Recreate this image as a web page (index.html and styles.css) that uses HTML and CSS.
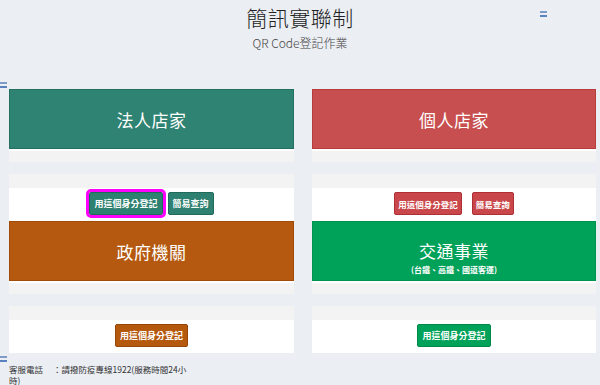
FILE: index.html
```html
<!DOCTYPE html>
<html lang="zh-Hant">
<head>
<meta charset="utf-8">
<title>簡訊實聯制</title>
<link rel="stylesheet" href="styles.css">
</head>
<body>
<header class="head">
  <h1 class="title">簡訊實聯制</h1>
  <p class="subtitle">QR Code登記作業</p>
  <span class="pic pic-top"><svg width="7" height="6" viewBox="0 0 7 6"><rect x="0" y="0" width="7" height="2" fill="#7f9cc9"/><rect x="0" y="4" width="7" height="2" fill="#5b82c0"/></svg></span>
</header>
<div class="picrow"><svg width="7" height="6" viewBox="0 0 7 6"><rect x="0" y="0" width="7" height="2" fill="#7f9cc9"/><rect x="0" y="4" width="7" height="2" fill="#5b82c0"/></svg></div>
<main class="grid">
  <section class="cell">
    <div class="card">
      <div class="hero teal">法人店家</div>
      <div class="foot"></div>
    </div>
    <div class="card card-low">
      <div class="cap"></div>
      <div class="actions">
        <a class="btn btn-teal btn-focus">用這個身分登記</a>
        <a class="btn btn-teal">簡易查詢</a>
      </div>
    </div>
  </section>
  <section class="cell">
    <div class="card">
      <div class="hero red">個人店家</div>
      <div class="foot"></div>
    </div>
    <div class="card card-low">
      <div class="cap"></div>
      <div class="actions actions-wide">
        <a class="btn btn-red btn-slim">用這個身分登記</a>
        <a class="btn btn-red btn-slim">簡易查詢</a>
      </div>
    </div>
  </section>
  <section class="cell">
    <div class="card">
      <div class="hero orange">政府機關</div>
      <div class="foot"></div>
    </div>
    <div class="card card-low">
      <div class="cap"></div>
      <div class="actions">
        <a class="btn btn-orange">用這個身分登記</a>
      </div>
    </div>
  </section>
  <section class="cell">
    <div class="card">
      <div class="hero green hero-stack">
        <span class="hero-main">交通事業</span>
        <span class="hero-sub">(台鐵、高鐵、國道客運)</span>
      </div>
      <div class="foot"></div>
    </div>
    <div class="card card-low">
      <div class="cap"></div>
      <div class="actions">
        <a class="btn btn-green">用這個身分登記</a>
      </div>
    </div>
  </section>
</main>
<div class="picrow picrow-foot"><svg width="7" height="6" viewBox="0 0 7 6"><rect x="0" y="0" width="7" height="2" fill="#7f9cc9"/><rect x="0" y="4" width="7" height="2" fill="#5b82c0"/></svg></div>
<footer class="contact">
  <div class="contact-line"><span class="label">客服電話</span><span>：請撥防疫專線1922(服務時間24小</span></div>
  <div class="contact-line">時)</div>
</footer>
</body>
</html>
```

FILE: styles.css
```css
* { box-sizing: border-box; }
html, body { margin: 0; padding: 0; }
body {
  background: #ebeef3;
  font-family: "Noto Sans CJK TC", "Noto Sans", sans-serif;
  color: #333;
  width: 600px;
  height: 385px;
  overflow: hidden;
}
.head {
  position: relative;
  text-align: center;
  padding-top: 2px;
}
.title {
  margin: 0;
  font-size: 21px;
  line-height: 30px;
  font-weight: 300;
  color: #222;
  letter-spacing: 0.5px;
}
.subtitle {
  margin: 2px 0 0;
  font-size: 12px;
  line-height: 18px;
  font-weight: 300;
  color: #444;
}
.pic { display: block; line-height: 0; }
.pic-top { position: absolute; left: 540px; top: 10px; }
.picrow {
  margin-top: 29px;
  height: 8px;
  line-height: 0;
}
.picrow-foot { margin-top: 2px; height: 9px; }
.grid {
  display: grid;
  grid-template-columns: 285px 284px;
  column-gap: 18px;
  padding-left: 9px;
}
.cell { display: flex; flex-direction: column; }
.card {
  background: #fff;
  display: flex;
  flex-direction: column;
}
.card-low { margin-top: 12px; }
.hero {
  height: 60px;
  display: flex;
  align-items: center;
  justify-content: center;
  color: #fff;
  font-size: 17px;
  letter-spacing: 0.5px;
  border: 1px solid transparent;
}
.teal { background: #2f8373; border-color: #237060; }
.red { background: #c84f4f; border-color: #b83c3c; }
.orange { background: #b4590f; border-color: #a24a08; }
.green { background: #00a159; border-color: #00934f; }
.hero-stack {
  flex-direction: column;
  justify-content: flex-start;
  padding-top: 17px;
}
.hero-main { line-height: 24px; }
.hero-sub {
  margin-top: 2px;
  font-size: 8px;
  line-height: 10px;
  font-weight: 700;
  letter-spacing: 0;
}
.foot {
  margin-top: 2px;
  height: 11px;
  background: #f3f3f3;
}
.cap { height: 14px; background: #f3f3f3; }
.actions {
  display: flex;
  justify-content: center;
  gap: 5px;
  padding: 4px 0 6px;
}
.actions-wide { gap: 10px; }
.btn {
  display: inline-flex;
  align-items: center;
  height: 23px;
  padding: 0 4px;
  font-size: 9px;
  font-weight: 700;
  color: #fff;
  border: 1px solid transparent;
  border-radius: 2px;
}
.btn-slim { padding: 0 3px; font-size: 8.5px; }
.btn-teal { background: #2e8070; border-color: #1f6a5b; }
.btn-red { background: #c9474a; border-color: #ae3034; }
.btn-orange { background: #b5590f; border-color: #974609; }
.btn-green { background: #00a159; border-color: #008a4a; }
.btn-focus { outline: 3px solid #f0f; outline-offset: 0; }
.contact {
  padding-left: 9px;
  font-size: 8.5px;
  line-height: 11px;
  color: #333;
}
.contact-line { display: flex; }
.label { width: 44px; }
```
